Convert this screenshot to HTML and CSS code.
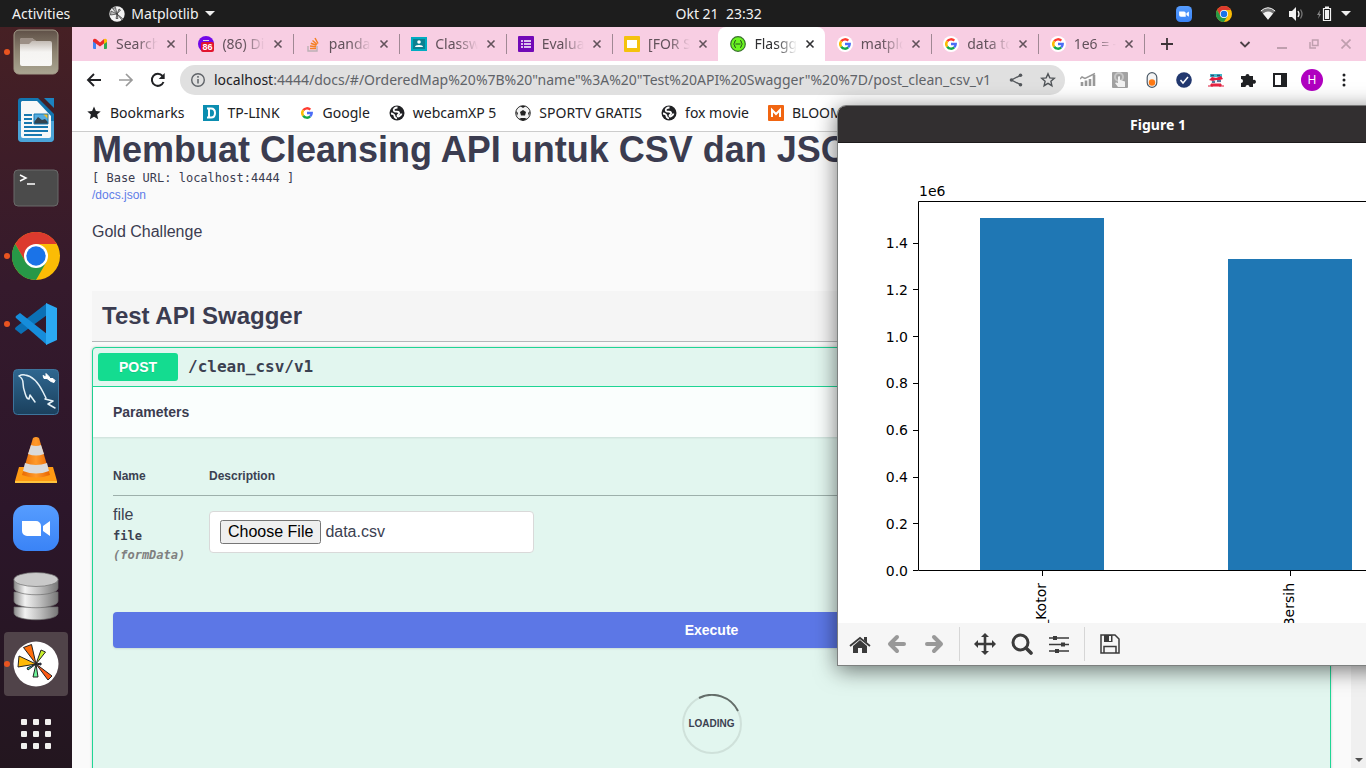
FILE: index.html
```html
<!DOCTYPE html>
<html lang="en">
<head>
<meta charset="utf-8">
<title>Flasgger</title>
<link rel="stylesheet" href="styles.css">
</head>
<body>
<svg class="defs" aria-hidden="true">
  <defs>
    <linearGradient id="gSilver" x1="0" x2="1"><stop offset="0" stop-color="#8b8b8b"/><stop offset=".25" stop-color="#f2f2f2"/><stop offset=".6" stop-color="#bcbcbc"/><stop offset="1" stop-color="#777"/></linearGradient>
    <linearGradient id="gFiles" x1="0" y1="0" x2="0" y2="1"><stop offset="0" stop-color="#5f5047"/><stop offset=".5" stop-color="#8d8371"/><stop offset="1" stop-color="#aaa592"/></linearGradient>
    <linearGradient id="gFolder" x1="0" y1="0" x2="0" y2="1"><stop offset="0" stop-color="#b5aba3"/><stop offset=".5" stop-color="#f5f4f2"/><stop offset="1" stop-color="#f8f7f5"/></linearGradient>
    <linearGradient id="gSql" x1="0" y1="0" x2="0" y2="1"><stop offset="0" stop-color="#2f6790"/><stop offset="1" stop-color="#1b405d"/></linearGradient>
    <linearGradient id="gZoom" x1="0" y1="0" x2="0" y2="1"><stop offset="0" stop-color="#569dff"/><stop offset="1" stop-color="#3a83f6"/></linearGradient>
    <linearGradient id="gCone" x1="0" x2="1"><stop offset="0" stop-color="#e86a05"/><stop offset=".5" stop-color="#ff9a2b"/><stop offset="1" stop-color="#e86400"/></linearGradient>
    <symbol id="chrome" viewBox="0 0 48 48">
      <circle cx="24" cy="24" r="24" fill="#fbbc05"/>
      <path d="M24 12H44.800A24 24 0 0 0 3.200 12L13.600 30Z" fill="#dc3a2e"/>
      <path d="M3.200 12A24 24 0 0 0 24 48L34.400 30 24 36 13.600 30Z" fill="#279847"/>
      <circle cx="24" cy="24" r="12" fill="#fff"/><circle cx="24" cy="24" r="9.700" fill="#1a73e8"/>
    </symbol>
    <symbol id="zoomapp" viewBox="0 0 46 46">
      <rect width="46" height="46" rx="13" fill="url(#gZoom)"/>
      <path d="M9 16h14a5 5 0 0 1 5 5v10H14a5 5 0 0 1-5-5ZM30 21l7-5v15l-7-5Z" fill="#fff"/>
    </symbol>
    <symbol id="google" viewBox="0 0 16 16">
      <g fill="none" stroke-width="2.400"><path d="M4.200 5.200A4.700 4.700 0 0 1 11.300 4.700" stroke="#ff3b30"/><path d="M4.200 10.800a4.700 4.700 0 0 1 0-5.600" stroke="#fbbc05"/><path d="M11.200 11.400a4.700 4.700 0 0 1-7-.600" stroke="#14a849"/><path d="M8 8h4.700a4.700 4.700 0 0 1-1.500 3.400" stroke="#4a6cf7"/></g>
    </symbol>
    <symbol id="globe" viewBox="0 0 16 16">
      <circle cx="8" cy="8" r="7.500" fill="#202124"/><path d="M8.500 2.500c-3 0-4.500 2-3.500 3.500s4-.5 5 1.500-2 2-1.500 3.500 3.500-.5 4-2.500M2 8.500c2 0 3.500 1.500 3.500 2.500s1 2 2.500 2.500" fill="none" stroke="#fff" stroke-width="1.800"/>
    </symbol>
    <symbol id="mpl" viewBox="0 0 46 46">
      <circle cx="23" cy="23" r="22.500" fill="#fff"/>
      <g stroke="#222" stroke-width="1"><path d="M23 23 10.500 6.500l8-3Z" fill="#ff6d0a"/><path d="m23 23 5-14 4.500 2Z" fill="#c8f02c"/><path d="M23 23 5 26l1-11Z" fill="#ffba08"/><path d="m23 23 16 12-4 4Z" fill="#ff5a14"/><path d="m23 23 2 13h-5Z" fill="#6df59a"/><path d="m23 23-8 6-1-2Z" fill="#22c6bd"/><path d="m23 23 5-1v2Z" fill="#2038a0"/></g>
    </symbol>
    <symbol id="x" viewBox="0 0 10 10"><path d="m1.500 1.500 7 7m0-7-7 7" fill="none" stroke="currentColor" stroke-width="1.600"/></symbol>
  </defs>
</svg>

<header class="topbar">
  <div class="topbar-left">
    <button class="sys">Activities</button>
    <button class="sys app"><svg width="16" height="16" viewBox="0 0 16 16"><circle cx="8" cy="8" r="7.700" fill="#f2f2f2"/><g fill="#bbb" stroke="#333" stroke-width=".7"><path d="M8 8 3.500 2.500l3-1ZM8 8l2-5 1.500 1ZM8 8l-6.500 1 .500-4ZM8 8l5.500 4.500-1 1ZM8 8l1 4.500H7Z"/></g></svg>Matplotlib <svg width="10" height="5" viewBox="0 0 10 5"><path d="M0 0h10L5 5Z" fill="#eee"/></svg></button>
  </div>
  <button class="sys clock">Okt 21&nbsp; 23:32</button>
  <div class="tray">
    <svg width="16" height="16"><use href="#zoomapp"/></svg>
    <svg class="tray-chrome" width="16" height="16"><use href="#chrome"/></svg>
    <svg width="16" height="16" viewBox="0 0 16 16"><path d="M.8 5Q8-1.500 15.200 5L8 13.800Z" fill="#777"/><path d="M.8 5Q8-1.500 15.200 5" fill="none" stroke="#f2f2f2"/><path d="M3 7.500q5-4 10 0L8 13.800Z" fill="#f2f2f2"/></svg>
    <svg width="16" height="16" viewBox="0 0 16 16"><path d="M1 5h3l4-4v14l-4-4H1Z" fill="#f2f2f2"/><path d="M10 5q2 3 0 6" fill="none" stroke="#f2f2f2" stroke-width="1.300"/><path d="M12.500 3.500q3 4.500 0 9" fill="none" stroke="#777" stroke-width="1.300"/></svg>
    <svg width="16" height="16" viewBox="0 0 16 16"><path d="M4 4 1 9h2l-1 4 3-5H3.500Z" fill="#888"/><path d="M7.500 2.500h7v12h-7Z" fill="none" stroke="#f2f2f2" stroke-width="1.200"/><path d="M9 .500h4v2H9ZM9 4h4v9H9Z" fill="#f2f2f2"/></svg>
    <svg width="10" height="5" viewBox="0 0 10 5"><path d="M0 0h10L5 5Z" fill="#eee"/></svg>
  </div>
</header>

<div class="desktop">
  <nav class="dock" aria-label="Dock">
    <button class="dock-item running" aria-label="Files"><svg width="46" height="46" viewBox="0 0 46 46"><rect x="1" y="1" width="44" height="44" rx="5" fill="url(#gFiles)" stroke="#a39c89"/><path d="M7 11q0-2 2-2h10l4 3h14q2 0 2 2v21q0 2-2 2H9q-2 0-2-2Z" fill="url(#gFolder)"/><path d="M7 11q0-2 2-2h10l4 3h-4l-3 3H7Z" fill="#9c8f86"/></svg></button>
    <button class="dock-item" aria-label="Writer"><svg width="46" height="46" viewBox="0 0 46 46"><path d="M8 1h17l16 16v24q0 4-4 4H9q-4 0-4-4V4q0-3 3-3Z" fill="#1375af"/><path d="M5 24h36v17q0 4-4 4H9q-4 0-4-4Z" fill="#4ba4d8"/><path d="M9 4h15l14 15v20q0 2-2 2H10q-2 0-2-2V5Z" fill="#f8f8f8"/><path d="M31 1h10v10Z" fill="#1c83c0"/><path d="M11 18h8m-8 4h8m-8 4h8m-8 4h24m-24 4h24m-24 4h18" stroke="#1778b0" stroke-width="2"/><path d="M21 17h14v10H21Z" fill="#55ace0"/><path d="M30 17h5v5Z" fill="#f6bd22"/><path d="m21 25 4-5 4 3 3-1 3 3v2H21Z" fill="#34424d"/><path d="M21 17h14v10H21Z" fill="none" stroke="#1778b0"/></svg></button>
    <button class="dock-item" aria-label="Terminal"><svg width="46" height="38" viewBox="0 0 46 38"><rect x="1" y="1" width="44" height="36" rx="4" fill="#4b4b4b" stroke="#6a6a6a"/><path d="m7 6 6 3-6 3M14 15h8" fill="none" stroke="#fff" stroke-width="1.500"/></svg></button>
    <button class="dock-item running" aria-label="Chrome"><svg width="48" height="48"><use href="#chrome"/></svg></button>
    <button class="dock-item running" aria-label="Visual Studio Code"><svg width="44" height="44" viewBox="0 0 44 44"><path d="M33 1v12L7 32 2 28q-2-1 0-3Z" fill="#0b70b5"/><path d="M2 16q-1-1 0-2l4-3L33 32v11L2 16Z" fill="#168ddb"/><path d="m32 1 11 5v32l-11 5Z" fill="#2ba9f3"/></svg></button>
    <button class="dock-item" aria-label="MySQL Workbench"><svg width="46" height="46" viewBox="0 0 46 46"><rect x=".5" y=".5" width="45" height="45" rx="4" fill="url(#gSql)" stroke="#3d749c"/><g fill="none" stroke="#e5f1f7" stroke-width="1.500" stroke-linecap="round" stroke-linejoin="round"><path d="M6 7q3-2 6-1c8 1 13 7 18 17l3 6-1 1 8 2-5 3 7 4M6 7c3 2 4 4 4 7 0 6 2 10 3 13q1 3 3 3l1-4 5 7"/></g><path d="M33 4.500l3 3 1 2 3 0 2 2-1 2-3-1-4-3-3 0-1-3 2 1 1-1Z" fill="#fff" stroke="#fff"/></svg></button>
    <button class="dock-item" aria-label="VLC"><svg width="46" height="48" viewBox="0 0 46 48"><path d="M6 31h34l4 14q0 2-1 2H3q-1 0-1-2Z" fill="#ff9a13"/><path d="M2 45h42v2H2Z" fill="#ffc33d"/><path d="M20 2q3-2 6 0l11 37q-14 5-28 0Z" fill="url(#gCone)"/><path d="m18 9-3 9q8 3 16 0l-3-9q-5 2-10 0ZM12 27l-2 8q13 5 26 0l-2-8q-11 4-22 0Z" fill="#dadada"/></svg></button>
    <button class="dock-item" aria-label="Zoom"><svg width="46" height="46"><use href="#zoomapp"/></svg></button>
    <button class="dock-item" aria-label="Database"><svg width="46" height="50" viewBox="0 0 46 50"><g stroke="#6f6f6f" stroke-width=".7"><path d="M1 36v6c0 9 44 9 44 0v-6Z" fill="url(#gSilver)"/><path d="M1 21v9c0 9 44 9 44 0v-9Z" fill="url(#gSilver)"/><path d="M1 8v9c0 9 44 9 44 0V8Z" fill="url(#gSilver)"/><ellipse cx="23" cy="8.500" rx="22" ry="7" fill="#c9c9c9"/></g></svg></button>
    <button class="dock-item running focused" aria-label="Matplotlib"><svg width="46" height="46"><use href="#mpl"/></svg></button>
    <button class="dock-item apps" aria-label="Show Applications"><svg width="30" height="30" viewBox="0 0 30 30" fill="#f1efee"><rect width="6" height="6" rx="1"/><rect x="12" width="6" height="6" rx="1"/><rect x="24" width="6" height="6" rx="1"/><rect y="12" width="6" height="6" rx="1"/><rect x="12" y="12" width="6" height="6" rx="1"/><rect x="24" y="12" width="6" height="6" rx="1"/><rect y="24" width="6" height="6" rx="1"/><rect x="12" y="24" width="6" height="6" rx="1"/><rect x="24" y="24" width="6" height="6" rx="1"/></svg></button>
  </nav>

  <main class="browser">
    <div class="tabstrip">
      <div class="tabs">
        <div class="tab"><svg width="16" height="16" viewBox="0 0 16 16"><path d="M1 4h3v9H2q-1 0-1-1Z" fill="#4285f4"/><path d="M12 4h3v8q0 1-1 1h-2Z" fill="#34a853"/><path d="M1 4q1-2 3-1l4 3.500L12 3v4.500L8 10.500 1 5.500Z" fill="#ea2a2a"/><path d="M12 3q2-1 3 1v2l-3 2Z" fill="#fbbc04"/></svg><span class="tab-title">Search results</span><button aria-label="Close tab"><svg width="10" height="10"><use href="#x"/></svg></button></div>
        <div class="tab"><svg width="16" height="16" viewBox="0 0 16 16"><circle cx="8" cy="8" r="8" fill="#7209e8"/><path d="M5 4.500h6" stroke="#ddd"/><rect x="3" y="6" width="13" height="10" rx="2" fill="#e3142e"/><text x="9.500" y="14" class="badge">86</text></svg><span class="tab-title">(86) Discord</span><button aria-label="Close tab"><svg width="10" height="10"><use href="#x"/></svg></button></div>
        <div class="tab"><svg width="16" height="16" viewBox="0 0 16 16" fill="none"><path d="M3 10v5h9v-5" stroke="#bcb0b5" stroke-width="1.400"/><path d="M5 12.500h6M5 10l6 .800M5.800 7.300l5.700 2M7.500 4.500l4.600 4M10 2l3 5.500" stroke="#f48024" stroke-width="1.500"/></svg><span class="tab-title">pandas plot</span><button aria-label="Close tab"><svg width="10" height="10"><use href="#x"/></svg></button></div>
        <div class="tab"><svg width="16" height="16" viewBox="0 0 16 16"><path d="M0 1h16v14H0Z" fill="#00acc1"/><path d="M2 3h12v10H2Z" fill="#0b8091"/><circle cx="8" cy="6" r="1.800" fill="#fff"/><path d="M4 11q0-2 4-2t4 2Z" fill="#fff"/></svg><span class="tab-title">Classwork</span><button aria-label="Close tab"><svg width="10" height="10"><use href="#x"/></svg></button></div>
        <div class="tab"><svg width="16" height="16" viewBox="0 0 16 16"><rect width="16" height="16" rx="1" fill="#7209b7"/><path d="M3 5h2m1 0h7M3 8h2m1 0h7M3 11h2m1 0h7" stroke="#fff" stroke-width="1.600"/></svg><span class="tab-title">Evaluation</span><button aria-label="Close tab"><svg width="10" height="10"><use href="#x"/></svg></button></div>
        <div class="tab last"><svg width="16" height="16" viewBox="0 0 16 16"><rect width="16" height="16" rx="1" fill="#f4c20d"/><path d="M3 4h10v8H3Z" fill="#fff"/></svg><span class="tab-title">[FOR STUDENT</span><button aria-label="Close tab"><svg width="10" height="10"><use href="#x"/></svg></button></div>
        <div class="tab active"><svg width="16" height="16" viewBox="0 0 16 16"><circle cx="8" cy="8" r="7.300" fill="#6bf520" stroke="#38702c" stroke-width="1.200"/><path d="M6 4.500q-1.500 0-1.300 1.500T3.500 8q1.300.500 1.200 2T6 11.500m4-7q1.500 0 1.300 1.500T12.500 8q-1.300.500-1.200 2T10 11.500M5.500 8h5" fill="none" stroke="#24551c"/></svg><span class="tab-title">Flasgger</span><button aria-label="Close tab"><svg width="10" height="10"><use href="#x"/></svg></button></div>
        <div class="tab"><svg class="round" width="16" height="16"><use href="#google"/></svg><span class="tab-title">matplotlib</span><button aria-label="Close tab"><svg width="10" height="10"><use href="#x"/></svg></button></div>
        <div class="tab"><svg class="round" width="16" height="16"><use href="#google"/></svg><span class="tab-title">data to bar</span><button aria-label="Close tab"><svg width="10" height="10"><use href="#x"/></svg></button></div>
        <div class="tab"><svg class="round" width="16" height="16"><use href="#google"/></svg><span class="tab-title">1e6 = - Goo</span><button aria-label="Close tab"><svg width="10" height="10"><use href="#x"/></svg></button></div>
      </div>
      <button class="newtab" aria-label="New tab"><svg width="12" height="12" viewBox="0 0 12 12"><path d="M6 0v12M0 6h12" stroke="#3d3338" stroke-width="1.800"/></svg></button>
      <div class="winctl">
        <button class="dark" aria-label="Search tabs"><svg width="12" height="12" viewBox="0 0 12 12"><path d="m1.500 4 4.500 4.500L10.500 4" fill="none" stroke="#4c4046" stroke-width="1.800"/></svg></button>
        <button aria-label="Minimize"><svg width="10" height="10" viewBox="0 0 10 10"><path d="M0 9h10" stroke="#bf9fae" stroke-width="2"/></svg></button>
        <button aria-label="Restore"><svg width="10" height="10" viewBox="0 0 10 10"><path d="M3.500 1h5.500v5.500H3.500ZM1 3v6h6" fill="none" stroke="#bf9fae" stroke-width="1.500"/></svg></button>
        <button aria-label="Close"><svg width="10" height="10" viewBox="0 0 10 10"><path d="m.500.500 9 9m0-9-9 9" stroke="#bf9fae" stroke-width="1.700"/></svg></button>
      </div>
    </div>

    <div class="toolbar">
      <button class="tool" aria-label="Back"><svg width="16" height="16" viewBox="0 0 16 16"><path d="M15 8H2m6-6L2 8l6 6" fill="none" stroke="#202124" stroke-width="1.900"/></svg></button>
      <button class="tool" aria-label="Forward"><svg width="16" height="16" viewBox="0 0 16 16"><path d="M1 8h13M8 2l6 6-6 6" fill="none" stroke="#9a9a9a" stroke-width="1.700"/></svg></button>
      <button class="tool" aria-label="Reload"><svg width="16" height="16" viewBox="0 0 16 16"><path d="M13.500 10A6 6 0 1 1 12.500 4" fill="none" stroke="#202124" stroke-width="2"/><path d="M14.700 1v6H8.700Z" fill="#202124"/></svg></button>
      <div class="omnibox">
        <svg width="16" height="16" viewBox="0 0 16 16"><circle cx="8" cy="8" r="6.300" fill="none" stroke="#5f6368" stroke-width="1.400"/><path d="M8 7v4.500M8 4v1.700" stroke="#5f6368" stroke-width="1.500"/></svg>
        <div class="url" role="textbox" aria-label="Address"><b>localhost</b>:4444/docs/#/OrderedMap%20%7B%20"name"%3A%20"Test%20API%20Swagger"%20%7D/post_clean_csv_v1</div>
        <button class="tool" aria-label="Share"><svg width="14" height="14" viewBox="0 0 14 14"><path d="M11.500 2.300 2.500 7l9 4.700" fill="none" stroke="#54585c" stroke-width="1.300"/><g fill="#54585c"><circle cx="11.500" cy="2.300" r="1.800"/><circle cx="2.500" cy="7" r="1.800"/><circle cx="11.500" cy="11.700" r="1.800"/></g></svg></button>
        <button class="tool" aria-label="Bookmark this page"><svg width="16" height="16" viewBox="0 0 16 16"><path d="m8 1.800 1.800 4.100 4.500.400-3.400 3 1 4.400L8 11.400l-3.900 2.300 1-4.400-3.400-3 4.500-.400Z" fill="none" stroke="#505458" stroke-width="1.400"/></svg></button>
      </div>
      <button class="tool" aria-label="Analytics"><svg width="16" height="16" viewBox="0 0 16 16"><path d="M2 14V10m4 4V8.500m4 5.500V7m4 7V3" stroke="#999" stroke-width="2.600"/><path d="m0 7 2-2 3 1.500L15 1.500" fill="none" stroke="#999" stroke-width="1.500"/></svg></button>
      <button class="tool" aria-label="Clicker"><svg width="16" height="16" viewBox="0 0 16 16"><rect width="16" height="16" rx="1" fill="#a2a2a2"/><circle cx="7" cy="5" r="4" fill="none" stroke="#c5c5c5" stroke-width="2"/><path d="M6 5q1.500-2 2 0v3l5 1.500V15H6l-3-4q1-1 3 0Z" fill="#f2f2f2"/></svg></button>
      <button class="tool" aria-label="Toggle"><svg width="16" height="16" viewBox="0 0 16 16"><rect x="3.200" y=".7" width="9.600" height="14.600" rx="4.800" fill="#f4f4f4" stroke="#4d5b68" stroke-width="1.200"/><circle cx="8" cy="10.500" r="3.200" fill="#ff7a14"/></svg></button>
      <button class="tool" aria-label="Verified"><svg width="16" height="16" viewBox="0 0 16 16"><circle cx="8" cy="8" r="7.800" fill="#22386f"/><path d="m4.500 8 2.500 3 5-6" fill="none" stroke="#fff" stroke-width="1.500"/></svg></button>
      <button class="tool" aria-label="Store"><svg width="16" height="16" viewBox="0 0 16 16"><path d="M2 2h12v3H2Z" fill="#42b7c8"/><path d="M3 5h10v6H3Z" fill="#e8f1f8"/><path d="m1 8 3-3 4 1 5-2 2 3-3 1-4 0-3 1Z" fill="#e01c3c"/><path d="M4 10h3m2-1h4M3 3.500h3m3 0h3" stroke="#2c4f7c" stroke-width="1.300"/><path d="M3 12h10v2H3ZM0 14h5m6 0h5" fill="#f02d48" stroke="#e01c3c" stroke-width="1"/></svg></button>
      <button class="tool" aria-label="Extensions"><svg width="16" height="16" viewBox="0 0 16 16"><path d="M1 4h4.500a2 2 0 1 1 4 0H13v4a2 2 0 1 1 0 3.500V15H9.500a2 2 0 0 0-4 0H1v-4a2 2 0 0 0 0-4Z" fill="#202124"/></svg></button>
      <button class="tool" aria-label="Side panel"><svg width="14" height="14" viewBox="0 0 14 14"><path d="M1 1h12v12H1Z" fill="#fff" stroke="#202124" stroke-width="2"/><path d="M8 1h5v12H8Z" fill="#202124"/></svg></button>
      <button class="tool" aria-label="Profile"><span class="avatar">H</span></button>
      <button class="tool" aria-label="Menu"><svg width="4" height="14" viewBox="0 0 4 14" fill="#202124"><circle cx="2" cy="2" r="1.500"/><circle cx="2" cy="7" r="1.500"/><circle cx="2" cy="12" r="1.500"/></svg></button>
    </div>

    <div class="bookmarks">
      <a href="#"><svg width="16" height="16" viewBox="0 0 16 16"><path d="m8 1.500 1.900 4.500 4.800.400-3.600 3.200 1.100 4.700L8 11.800l-4.200 2.500 1.100-4.700-3.600-3.200 4.800-.400Z" fill="#202124"/></svg>Bookmarks</a>
      <a href="#"><svg width="16" height="16" viewBox="0 0 16 16"><path d="M0 0h16v16H0Z" fill="#0b8db0"/><path d="M4 3.500h4q4 0 4 4.500t-4 4.500H4M6 3.500v9" fill="none" stroke="#fff" stroke-width="2"/></svg>TP-LINK</a>
      <a href="#"><svg width="16" height="16"><use href="#google"/></svg>Google</a>
      <a href="#"><svg width="16" height="16"><use href="#globe"/></svg>webcamXP 5</a>
      <a href="#"><svg width="16" height="16" viewBox="0 0 16 16"><circle cx="8" cy="8" r="7.300" fill="#f1f1f1" stroke="#333"/><path d="m8 5 3 2-1 3.500H6L5 7ZM5 1l3 2 3-2ZM1 6l2 2-1 3ZM15 6l-2 2 1 3ZM4 14l2-1 4 0 2 1-4 2Z" fill="#222"/></svg>SPORTV GRATIS</a>
      <a href="#"><svg width="16" height="16"><use href="#globe"/></svg>fox movie</a>
      <a href="#"><svg width="16" height="16" viewBox="0 0 16 16"><rect width="16" height="16" rx="1" fill="#f16511"/><path d="M4 12V5l4 4 4-4v7" fill="none" stroke="#fff" stroke-width="2"/></svg>BLOOMBERG</a>
    </div>

    <div class="viewport">
      <div class="page">
        <div class="info">
          <h1>Membuat Cleansing API untuk CSV dan JSON</h1>
          <pre>[ Base URL: localhost:4444 ]</pre>
          <a href="#">/docs.json</a>
          <p>Gold Challenge</p>
        </div>
        <h2>Test API Swagger</h2>
        <section class="opblock">
          <button class="summary"><span class="method">POST</span><span class="path">/clean_csv/v1</span></button>
          <h3>Parameters</h3>
          <div class="params">
            <table>
              <thead><tr><th>Name</th><th>Description</th></tr></thead>
              <tbody><tr>
                <td class="pname"><label for="file">file</label><span class="ptype">file</span><span class="pin">(formData)</span></td>
                <td><input id="file" type="file"></td>
              </tr></tbody>
            </table>
          </div>
          <button class="execute">Execute</button>
          <div class="loading"><svg width="60" height="60" viewBox="0 0 60 60" fill="none" stroke-width="2"><circle cx="30" cy="30" r="29" stroke="#cfe1da"/><path d="M17 4A29 29 0 0 1 56 17" stroke="#636d69"/></svg><span>LOADING</span></div>
        </section>
      </div>
      <div class="scrollbar"><svg width="8" height="4" viewBox="0 0 8 4"><path d="M0 0h8L4 4Z" fill="#505050"/></svg></div>
    </div>
  </main>
</div>

<section class="figure" aria-label="Figure 1">
  <header class="figure-title">Figure 1</header>
  <svg class="plot" width="640" height="480" viewBox="0 0 640 480">
    <path d="M142 75h124v352H142ZM390 116h124v311H390Z" fill="#1f77b4"/>
    <path d="M80.500 58.500h496v369h-496ZM75 427.500h5M75 380.500h5M75 334.500h5M75 287.500h5M75 240.500h5M75 193.500h5M75 146.500h5M75 100.500h5M204.500 428v5M452.500 428v5" fill="none" stroke="#000"/>
    <g class="ylabels"><text x="70" y="433">0.0</text><text x="70" y="386">0.2</text><text x="70" y="339">0.4</text><text x="70" y="292">0.6</text><text x="70" y="245">0.8</text><text x="70" y="199">1.0</text><text x="70" y="152">1.2</text><text x="70" y="105">1.4</text></g>
    <text x="81" y="53">1e6</text>
    <g class="ylabels"><text transform="translate(208 440) rotate(-90)">_Kotor</text><text transform="translate(456 440) rotate(-90)">Bersih</text></g>
  </svg>
  <div class="figure-tools">
    <button aria-label="Home"><svg width="22" height="22" viewBox="0 0 22 22"><path d="M15 4h3v6l-3-3ZM4 13l7-6 7 6v7h-5v-5H9v5H4Z" fill="#3b3b3b"/><path d="m1 13 10-8 10 8" fill="none" stroke="#3b3b3b" stroke-width="1.800"/></svg></button>
    <button aria-label="Back"><svg width="20" height="20" viewBox="0 0 20 20"><path d="M17 10H4m6-7-7 7 7 7" fill="none" stroke="#999" stroke-width="4" stroke-linejoin="round" stroke-linecap="round"/></svg></button>
    <button aria-label="Forward"><svg width="20" height="20" viewBox="0 0 20 20"><path d="M3 10h13m-6-7 7 7-7 7" fill="none" stroke="#999" stroke-width="4" stroke-linejoin="round" stroke-linecap="round"/></svg></button>
    <i></i>
    <button aria-label="Pan"><svg width="22" height="22" viewBox="0 0 22 22"><path d="M11 3v16M3 11h16" stroke="#3b3b3b" stroke-width="2.600"/><path d="m11 0 4 4H7ZM11 22l4-4H7ZM0 11l4-4v8ZM22 11l-4-4v8Z" fill="#3b3b3b"/></svg></button>
    <button aria-label="Zoom"><svg width="22" height="22" viewBox="0 0 22 22"><circle cx="9.500" cy="9.500" r="7.500" fill="none" stroke="#3b3b3b" stroke-width="3"/><path d="m15 15 5 5" stroke="#3b3b3b" stroke-width="3.600" stroke-linecap="round"/></svg></button>
    <button aria-label="Subplots"><svg width="20" height="20" viewBox="0 0 20 20"><path d="M0 4h20M0 10.500h20M0 17h20" stroke="#3b3b3b" stroke-width="1.500"/><path d="M4 2h4v4H4ZM12 8.500h4v4h-4ZM6 15h4v4H6Z" fill="#3b3b3b"/></svg></button>
    <i></i>
    <button aria-label="Save"><svg width="20" height="20" viewBox="0 0 20 20"><path d="M1 1h14l4 4v14H1ZM4 19v-6.500h12V19" fill="none" stroke="#3b3b3b" stroke-width="1.500"/><path d="M4 1h8.500v7H4Z" fill="#3b3b3b"/><path d="M9 2h2v5H9Z" fill="#f6f6f6"/></svg></button>
  </div>
</section>
<script src="main.js"></script>
</body>
</html>
```
FILE: styles.css
```css
* { box-sizing: border-box; }
body {
  margin: 0;
  height: 100vh;
  display: flex;
  flex-direction: column;
  overflow: hidden;
  position: relative;
  font: 14px/20px "Noto Sans", sans-serif;
  color: #202124;
}
button { font: inherit; color: inherit; border: 0; background: none; padding: 0; margin: 0; display: flex; align-items: center; justify-content: center; }
a { text-decoration: none; color: inherit; }
svg { display: block; flex: none; }
.defs { position: absolute; width: 0; height: 0; }

.topbar { flex: none; height: 27px; background: #1d1d1d; color: #f2f2f2; display: flex; align-items: center; padding: 0 15px 0 12px; }
.topbar-left { width: 50%; flex: none; padding-right: 8px; display: flex; gap: 39px; }
.clock { margin-left: -6px; }
.sys.app { gap: 6px; }
.tray { margin-left: auto; display: flex; align-items: center; gap: 12px; }
.tray-chrome { margin: 0 16px 0 12px; }
.tray svg:last-child { margin-left: -3px; }

.desktop { flex: 1; min-height: 0; display: flex; }
.dock { flex: none; width: 72px; padding: 0 4px 2px; background: linear-gradient(#462024, #351a2c 35%, #2c162a 65%, #23161f); display: flex; flex-direction: column; justify-content: flex-end; gap: 4px; overflow: hidden; }
.dock-item { flex: none; height: 64px; border-radius: 4px; position: relative; }
.dock-item.focused { background: #504349; }
.dock-item.apps { margin-top: 2px; }
.dock-item.running::before { content: ""; position: absolute; left: 0; top: 29px; width: 6px; height: 6px; border-radius: 50%; background: #e95420; }

.browser { flex: 1; min-width: 0; display: flex; flex-direction: column; background: #fff; }
.tabstrip { flex: none; height: 34px; background: #f8cee3; display: flex; padding: 0 4px 0 8px; }
.tabs { flex: 1; min-width: 0; display: flex; }
.tab { flex: 1; min-width: 0; display: flex; align-items: center; padding: 0 10px 0 12px; color: #62525b; position: relative; }
.tab::after { content: ""; position: absolute; right: -1px; top: 7px; width: 1px; height: 20px; background: #a08894; }
.tab.active::after, .tab.last::after { display: none; }
.tab.active { background: #fff; color: #303033; border-radius: 8px 8px 0 0; }
.tab-title { flex: 1; min-width: 0; margin: 0 8px; overflow: hidden; white-space: nowrap; -webkit-mask-image: linear-gradient(90deg, #000 50%, transparent); mask-image: linear-gradient(90deg, #000 50%, transparent); }
.round { background: #fff; border-radius: 50%; }
.badge { font: bold 9px "Liberation Sans", sans-serif; fill: #fff; text-anchor: middle; }
.newtab { width: 46px; }
.winctl { display: flex; margin-left: 34px; }
.winctl button { width: 32px; }
.winctl .dark { width: 42px; }

.toolbar { flex: none; height: 38px; display: flex; align-items: center; padding: 0 6px; }
.tool { flex: none; width: 32px; height: 30px; }
.omnibox { flex: 1; min-width: 0; height: 30px; margin: 0 7px 0 6px; padding: 0 1px 0 10px; border-radius: 15px; background: #e0e0e0; display: flex; align-items: center; }
.url { flex: 1; min-width: 0; margin-left: 8px; color: #5f6368; white-space: nowrap; overflow: hidden; }
.url b { font-weight: 400; color: #202124; }
.avatar { width: 22px; height: 22px; border-radius: 50%; background: #b000c0; color: #fff; font-size: 12px; line-height: 22px; }

.bookmarks { flex: none; height: 33px; padding: 0 14px 4px; display: flex; align-items: center; gap: 19px; border-bottom: 1px solid #ccc; overflow: hidden; white-space: nowrap; }
.bookmarks a { display: flex; align-items: center; gap: 8px; }

.viewport { flex: 1; min-height: 0; display: flex; overflow: hidden; background: #fafafa; }
.page { flex: 1; padding: 0 20px; font-family: "Liberation Sans", Arial, sans-serif; color: #3b4151; }
.scrollbar { flex: none; width: 15px; background: #f0f0f0; display: flex; align-items: flex-end; justify-content: center; padding-bottom: 6px; }
h1, h2, h3, p, pre { margin: 0; color: #3b3c50; }
.info { height: 159px; }
h1 { font-size: 36px; line-height: 36px; white-space: nowrap; }
.info pre { font: 12px/18px "DejaVu Sans Mono", monospace; padding-top: 1px; }
.info a { display: block; font-size: 12px; line-height: 16px; color: #5f7ce8; }
.info p { font-size: 16px; line-height: 20px; margin-top: 19px; }
h2 { height: 51px; padding: 0 10px; background: #f5f5f5; border-bottom: 1px solid #b4b7b9; font-size: 24px; line-height: 50px; }
.opblock { margin-top: 5px; height: 600px; border: 1px solid #1fd695; border-radius: 4px; background: #e2f6ef; box-shadow: 0 0 3px rgba(0,0,0,.19); }
.summary { width: 100%; height: 39px; padding: 0 5px; justify-content: flex-start; gap: 10px; border-bottom: 1px solid #1fd695; }
.method { width: 80px; height: 28px; border-radius: 3px; background: #14dc90; color: #fff; font-weight: 700; line-height: 28px; text-shadow: 0 1px 0 rgba(0,0,0,.1); }
.path { font: bold 16px/20px "DejaVu Sans Mono", monospace; }
h3 { height: 50px; padding: 0 20px; font-size: 14px; line-height: 50px; background: #fafefd; box-shadow: 0 1px 2px rgba(0,0,0,.1); }
.params { padding: 20px 20px 0; }
table { width: 100%; border-collapse: collapse; }
th { text-align: left; font-size: 12px; line-height: 14px; padding: 12px 0; border-bottom: 1px solid #9db0ab; }
td { padding: 15px 0 0; vertical-align: top; }
th:first-child { width: 96px; }
.pname { padding-top: 9px; }
.pname > * { display: block; }
.pname label { font-size: 16px; line-height: 20px; }
.ptype { font: bold 12px/22px "DejaVu Sans Mono", monospace; }
.pin { font: italic bold 12px/16px "DejaVu Sans Mono", monospace; color: #808080; }
input[type=file] { display: block; width: 325px; height: 42px; padding: 8px 10px; border: 1px solid #d9d9d9; border-radius: 4px; background: #fff; font: 16px "Liberation Sans", sans-serif; color: #3b4151; }
.execute { width: calc(100% - 40px); height: 36px; margin: 49px 20px 0; border-radius: 4px; background: #5c77e6; color: #fff; font-weight: 700; box-shadow: 0 1px 2px rgba(0,0,0,.1); }
.loading { margin-top: 46px; display: grid; place-items: center; }
.loading > * { grid-area: 1 / 1; }
.loading span { font-size: 10px; font-weight: 700; }

.figure { position: absolute; left: 837px; top: 105px; width: 642px; border: 1px solid #7d807f; border-top-color: #777; border-radius: 9px 9px 0 0; background: #fff; box-shadow: 0 4px 22px rgba(0,0,0,.55); overflow: hidden; }
.figure-title { height: 37px; background: #322f30; border-bottom: 1px solid #1e1b1c; color: #fff; font-weight: 700; line-height: 38px; text-align: center; }
.plot { font: 14px "DejaVu Sans", sans-serif; }
.ylabels { text-anchor: end; }
.figure-tools { height: 42px; padding: 0 3px; background: #f6f6f6; display: flex; align-items: center; }
.figure-tools button { width: 37px; height: 36px; }
.figure-tools i { width: 1px; height: 34px; margin: 0 6px 0 7px; background: #d6d6d6; }
```
FILE: main.js
```js
const transfer = new DataTransfer();
transfer.items.add(new File([''], 'data.csv'));
document.getElementById('file').files = transfer.files;
```
